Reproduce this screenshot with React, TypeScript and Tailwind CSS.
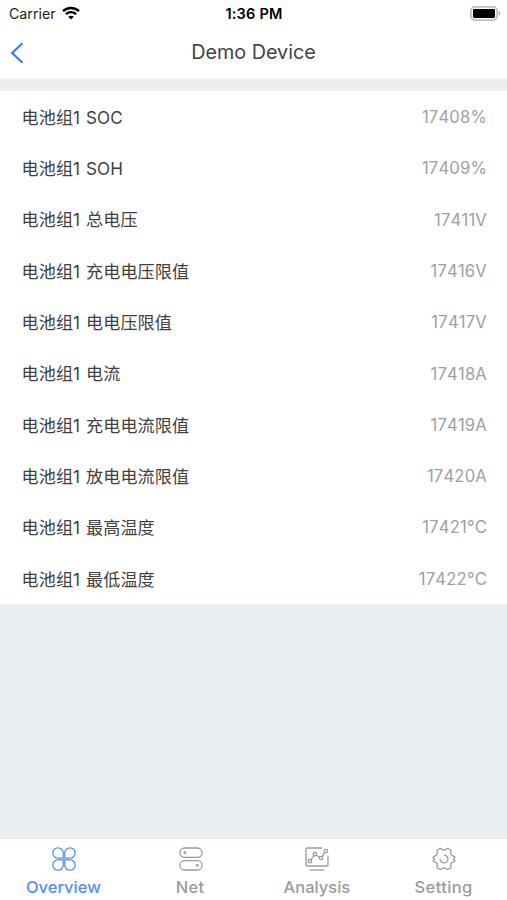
import React from 'react';

const readings = [
  { label: '电池组1 SOC', value: '17408%' },
  { label: '电池组1 SOH', value: '17409%' },
  { label: '电池组1 总电压', value: '17411V' },
  { label: '电池组1 充电电压限值', value: '17416V' },
  { label: '电池组1 电电压限值', value: '17417V' },
  { label: '电池组1 电流', value: '17418A' },
  { label: '电池组1 充电电流限值', value: '17419A' },
  { label: '电池组1 放电电流限值', value: '17420A' },
  { label: '电池组1 最高温度', value: '17421°C' },
  { label: '电池组1 最低温度', value: '17422°C' },
];

const WifiIcon = () => (
  <svg width="18" height="14" viewBox="0 0 18 14" fill="none" stroke="#000" strokeWidth="2.4">
    <path d="M1 5.2C5.4.9 12.6.9 17 5.2" />
    <path d="M3.9 8.2c2.9-2.8 7.3-2.8 10.2 0" />
    <path d="M9 13.6 6.2 10.8c1.6-1.5 4-1.5 5.6 0z" fill="#000" stroke="none" />
  </svg>
);

const BatteryIcon = () => (
  <svg width="31" height="15" viewBox="0 0 31 15" fill="none">
    <rect x="0.9" y="0.9" width="26.2" height="13.2" rx="4" stroke="#c0c0c0" strokeWidth="1.8" />
    <rect x="3" y="3" width="22" height="9" rx="1.2" fill="#000" />
    <path d="M28.7 5.3c2.2.7 2.2 3.7 0 4.4z" fill="#b0b0b0" />
  </svg>
);

const OverviewIcon = () => (
  <svg width="24" height="24" viewBox="0 0 24 24" fill="none" stroke="currentColor" strokeWidth="1.3">
    <path d="M11.2 11.2H6A5.2 5.2 0 1 1 11.2 6z" />
    <path d="M12.8 11.2V6A5.2 5.2 0 1 1 18 11.2z" />
    <path d="M11.2 12.8V18A5.2 5.2 0 1 1 6 12.8z" />
    <path d="M12.8 12.8H18A5.2 5.2 0 1 1 12.8 18z" />
  </svg>
);

const NetIcon = () => (
  <svg width="24" height="24" viewBox="0 0 24 24" fill="none" stroke="currentColor" strokeWidth="1.3">
    <rect x="0.9" y="1" width="22.2" height="9.4" rx="4.7" />
    <rect x="0.9" y="13.6" width="22.2" height="9.4" rx="4.7" />
    <circle cx="5.8" cy="5.7" r="1.4" fill="currentColor" stroke="none" />
    <circle cx="18.2" cy="18.3" r="1.4" fill="currentColor" stroke="none" />
  </svg>
);

const AnalysisIcon = () => (
  <svg width="24" height="24" viewBox="0 0 24 24" fill="none" stroke="currentColor" strokeWidth="1.3">
    <path d="M17 1H2.2Q1 1 1 2.2v15.6Q1 19 2.2 19h19.6q1.2 0 1.2-1.2V8.5" />
    <path d="M4.8 23h14.8" />
    <path d="m5.9 12.8 3-4.3M11.4 8.2l3.2 2M16.9 9.6l3-4.1" />
    <circle cx="4.9" cy="14.2" r="1.7" />
    <circle cx="9.9" cy="7.2" r="1.7" />
    <circle cx="16" cy="11" r="1.7" />
    <circle cx="20.9" cy="4.1" r="1.7" />
  </svg>
);

const SettingIcon = () => (
  <svg width="24" height="24" viewBox="0 0 24 24" fill="none" stroke="currentColor" strokeWidth="1.3" strokeLinejoin="round">
    <path d="M8 1.5C9.2.9 9.6 3.1 12 3.1S14.8.9 16 1.5L18.6 3C19.8 3.8 18 5.4 19 7.4S23 8.8 23 10.4C22.6 11.2 21.4 11.4 21.4 12S22.6 12.8 23 13.6C23 15.2 20 14.6 19 16.6S19.8 20.2 18.6 21L16 22.5C14.8 23.1 14.4 20.9 12 20.9S9.2 23.1 8 22.5L5.4 21C4.2 20.2 6 18.6 5 16.6S1 15.2 1 13.6C1.4 12.8 2.6 12.6 2.6 12S1.4 11.2 1 10.4C1 8.8 4 9.4 5 7.4S4.2 3.8 5.4 3z" />
    <path d="M12 8.1a3.9 3.9 0 1 1-3.9 3.9" />
  </svg>
);

const tabs = [
  { name: 'Overview', Icon: OverviewIcon, color: 'text-[#5590ec]', tracking: '' },
  { name: 'Net', Icon: NetIcon, color: 'text-[#9b9b9b]', tracking: 'tracking-[0.3px]' },
  { name: 'Analysis', Icon: AnalysisIcon, color: 'text-[#9b9b9b]', tracking: '' },
  { name: 'Setting', Icon: SettingIcon, color: 'text-[#9b9b9b]', tracking: 'tracking-[0.4px]' },
];

export default function App() {
  return (
    <div className="flex h-[900px] w-[507px] flex-col overflow-hidden bg-[#eceff2] font-['Inter','Noto_Sans_CJK_SC',sans-serif]">
      {/* Status bar */}
      <div className="grid h-[27px] shrink-0 grid-cols-3 items-center bg-white pr-[6px] pl-[9px] leading-none">
        <div className="flex items-center gap-[6px] text-[#222]">
          <span className="w-[47px] pt-px text-[14.2px] whitespace-nowrap">Carrier</span>
          <div className="-mt-px">
            <WifiIcon />
          </div>
        </div>
        <div className="pt-px pr-[2px] text-center text-[14.5px] font-semibold tracking-[0.2px] text-black">1:36 PM</div>
        <div className="flex justify-end">
          <BatteryIcon />
        </div>
      </div>

      {/* Header */}
      <header className="grid h-[51px] shrink-0 grid-cols-[60px_1fr_60px] items-center bg-white">
        <button className="pl-[10px] text-[#3b7cf0]" aria-label="Back">
          <svg width="14" height="22" viewBox="0 0 14 22" fill="none" stroke="currentColor" strokeWidth="2.2">
            <path d="M12.5 1.2 2.2 11l10.3 9.8" />
          </svg>
        </button>
        <h1 className="text-center text-[19.8px] leading-none text-[#444]">Demo Device</h1>
      </header>

      {/* Readings */}
      <ul className="mt-[13px] shrink-0 bg-white">
        {readings.map((item) => (
          <li key={item.label} className="flex h-[51.3px] items-center justify-between pt-[1.5px] pr-[20px] pl-[21.5px] leading-none">
            <span className="text-[17.1px] tracking-[0.1px] text-[#404040] [word-spacing:1px]">{item.label}</span>
            <span className="text-[16.6px] tracking-[0.2px] text-[#a0a0a0] [font-kerning:none]">{item.value}</span>
          </li>
        ))}
      </ul>

      {/* Tab bar */}
      <nav className="mt-auto grid h-[62px] shrink-0 grid-cols-4 border-t border-[#e5e7ea] bg-white">
        {tabs.map(({ name, Icon, color, tracking }) => (
          <div key={name} className={`flex flex-col items-center pt-[8px] ${color}`}>
            <div className="pl-px">
              <Icon />
            </div>
            <span className={`mt-[8px] text-[16.5px] leading-none font-medium ${tracking}`}>{name}</span>
          </div>
        ))}
      </nav>
    </div>
  );
}
